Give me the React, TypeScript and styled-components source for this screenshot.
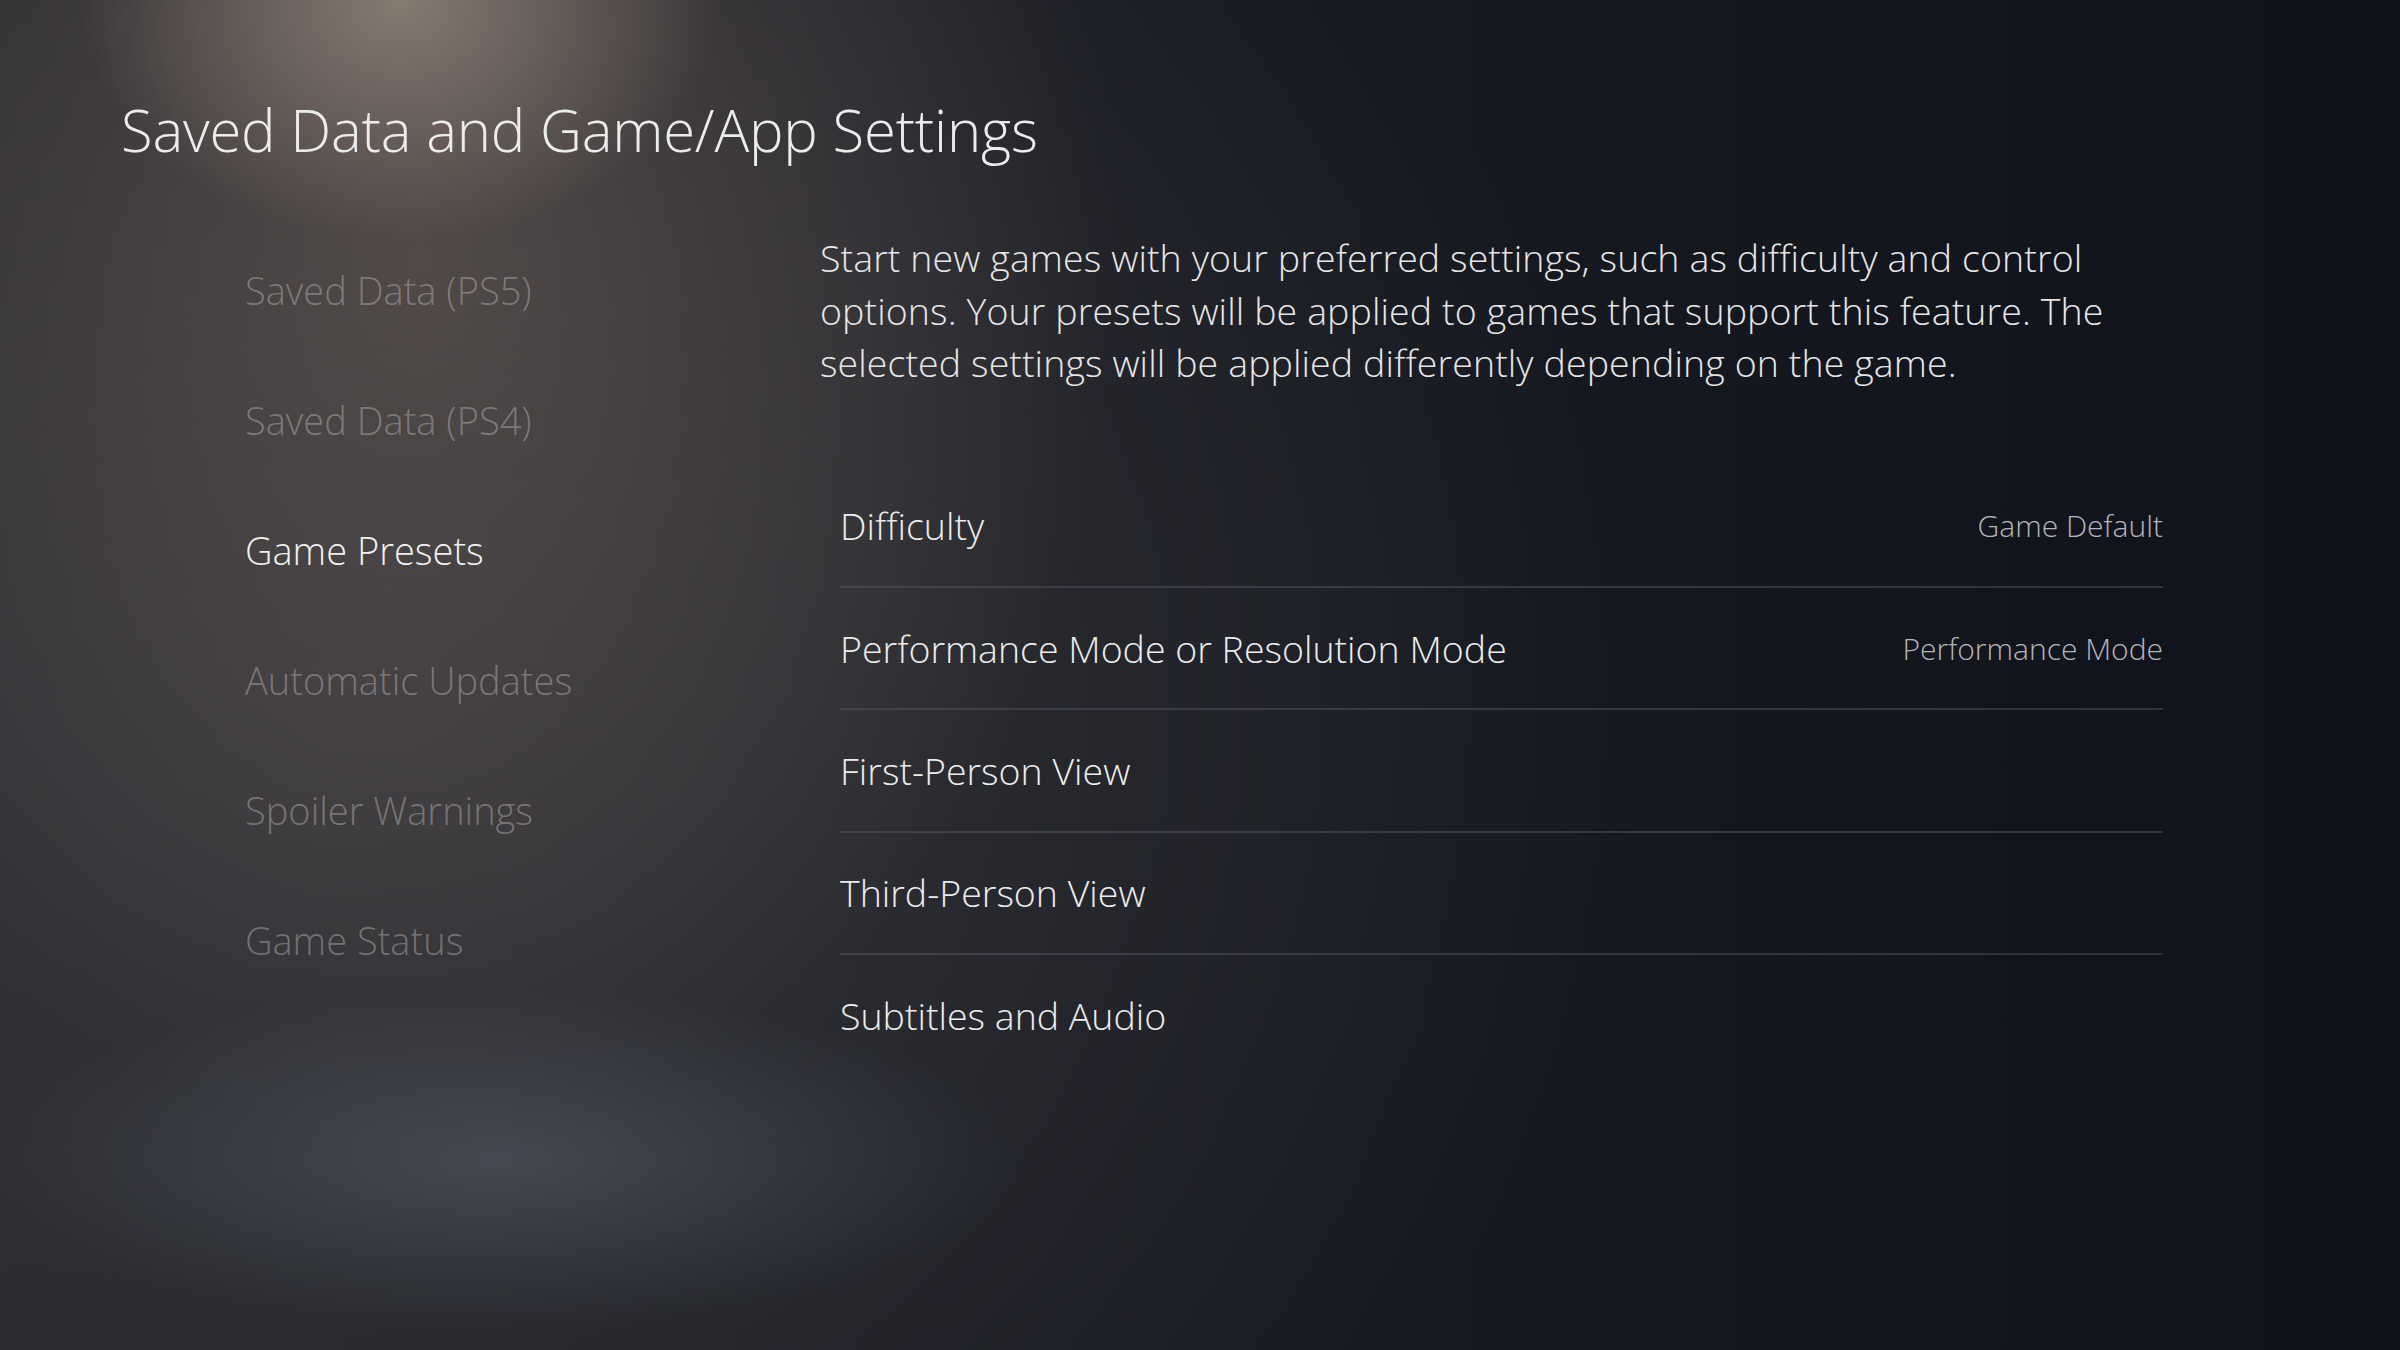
import React from "react";
import styled, { createGlobalStyle } from "styled-components";

const GlobalStyle = createGlobalStyle`
  html, body {
    margin: 0;
    padding: 0;
    background: #11141b;
  }
  body {
    font-family: "Open Sans", "Noto Sans", sans-serif;
  }
`;

const Screen = styled.div`
  width: 2400px;
  height: 1350px;
  box-sizing: border-box;
  overflow: hidden;
  padding: 90px 0 0 121px;
  color: #ececec;
  background:
    radial-gradient(ellipse 320px 240px at 400px 0px, rgba(190, 170, 150, 0.55), rgba(190, 170, 150, 0) 100%),
    radial-gradient(ellipse 700px 900px at 420px 250px, rgba(110, 96, 90, 0.55), rgba(110, 96, 90, 0) 100%),
    radial-gradient(ellipse 520px 170px at 500px 1160px, rgba(95, 105, 120, 0.45), rgba(95, 105, 120, 0) 100%),
    radial-gradient(ellipse 1300px 1100px at 350px 700px, rgba(60, 60, 64, 0.8), rgba(60, 60, 64, 0) 100%),
    linear-gradient(90deg, #24252a 0%, #1a1c23 45%, #0f121a 100%);
`;

const Title = styled.h1`
  margin: 0;
  font-size: 58px;
  line-height: 80px;
  font-weight: 300;
  color: #ececec;
  letter-spacing: -0.2px;
`;

const Columns = styled.div`
  display: flex;
  margin-top: 55px;
`;

const Sidebar = styled.nav`
  width: 699px;
  padding-left: 124px;
  box-sizing: border-box;
  display: flex;
  flex-direction: column;
`;

const NavItem = styled.div<{ $active?: boolean }>`
  height: 130px;
  display: flex;
  align-items: center;
  font-size: 38px;
  font-weight: 300;
  color: ${(p) => (p.$active ? "#f0f0f0" : "rgba(200, 195, 195, 0.42)")};
  white-space: nowrap;
`;

const Content = styled.section`
  width: 1343px;
  padding-top: 7px;
`;

const Description = styled.p`
  margin: 0;
  font-size: 37.5px;
  line-height: 52.5px;
  font-weight: 300;
  color: #e6e6e8;
  letter-spacing: 0.1px;
  white-space: nowrap;
`;

const OptionList = styled.div`
  margin: 76px 0 0 20px;
  display: flex;
  flex-direction: column;
`;

const OptionRow = styled.div<{ $last?: boolean }>`
  height: 122.4px;
  box-sizing: border-box;
  display: flex;
  align-items: center;
  justify-content: space-between;
  border-bottom: 2px solid ${(p) => (p.$last ? "transparent" : "rgba(90, 92, 100, 0.45)")};
`;

const OptionLabel = styled.span`
  font-size: 37.5px;
  font-weight: 300;
  color: #ececee;
`;

const OptionValue = styled.span`
  font-size: 30px;
  font-weight: 300;
  color: #b4b5ba;
`;

const navItems = [
  "Saved Data (PS5)",
  "Saved Data (PS4)",
  "Game Presets",
  "Automatic Updates",
  "Spoiler Warnings",
  "Game Status",
];

const options: { label: string; value?: string }[] = [
  { label: "Difficulty", value: "Game Default" },
  { label: "Performance Mode or Resolution Mode", value: "Performance Mode" },
  { label: "First-Person View" },
  { label: "Third-Person View" },
  { label: "Subtitles and Audio" },
];

export default function App() {
  return (
    <>
      <GlobalStyle />
      <Screen>
        <Title>Saved Data and Game/App Settings</Title>
        <Columns>
          <Sidebar>
            {navItems.map((item) => (
              <NavItem key={item} $active={item === "Game Presets"}>
                {item}
              </NavItem>
            ))}
          </Sidebar>
          <Content>
            <Description>
              Start new games with your preferred settings, such as difficulty and control
              <br />
              options. Your presets will be applied to games that support this feature. The
              <br />
              selected settings will be applied differently depending on the game.
            </Description>
            <OptionList>
              {options.map((o, i) => (
                <OptionRow key={o.label} $last={i === options.length - 1}>
                  <OptionLabel>{o.label}</OptionLabel>
                  {o.value && <OptionValue>{o.value}</OptionValue>}
                </OptionRow>
              ))}
            </OptionList>
          </Content>
        </Columns>
      </Screen>
    </>
  );
}
